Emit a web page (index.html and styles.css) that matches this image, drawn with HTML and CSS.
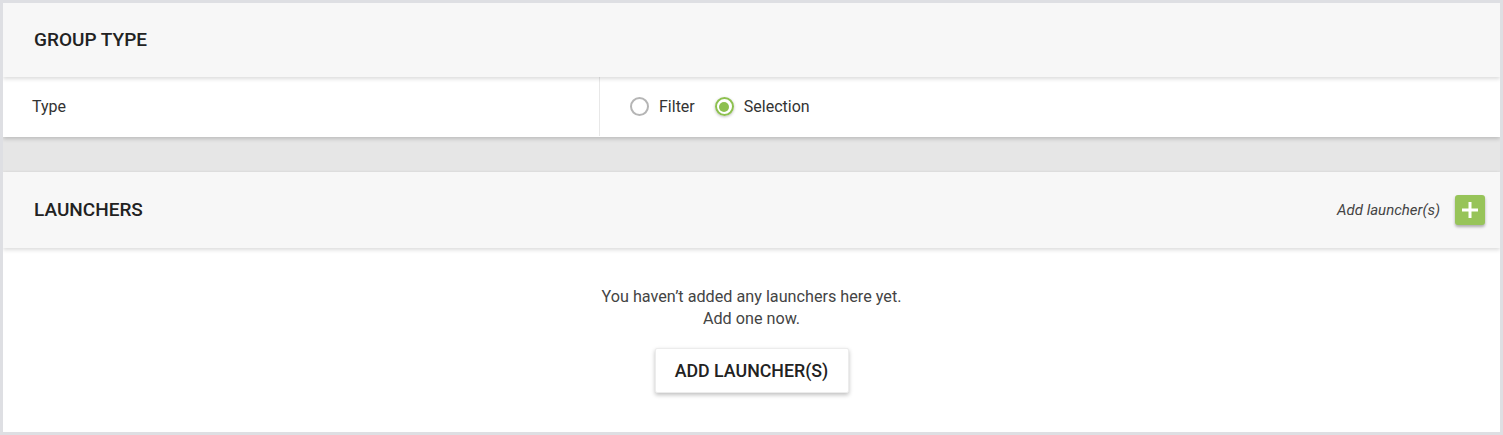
FILE: index.html
```html
<!DOCTYPE html>
<html>
<head>
<meta charset="utf-8">
<link rel="stylesheet" href="styles.css">
</head>
<body>
<div class="frame">
  <section class="card">
    <header class="card-head"><h2>GROUP TYPE</h2></header>
    <div class="row">
      <div class="row-label">Type</div>
      <div class="row-value">
        <label class="radio"><span class="dot"></span>Filter</label>
        <label class="radio checked"><span class="dot"></span>Selection</label>
      </div>
    </div>
  </section>
  <div class="gap"></div>
  <section class="card card-grow">
    <header class="card-head launchers-head">
      <h2>LAUNCHERS</h2>
      <div class="head-actions">
        <span class="add-hint">Add launcher(s)</span>
        <button class="plus-btn" aria-label="Add launcher(s)">
          <svg width="18" height="18" viewBox="0 0 18 18"><path d="M9 1v16M1 9h16" stroke="#fff" stroke-width="3" fill="none"/></svg>
        </button>
      </div>
    </header>
    <div class="empty">
      <p>You haven’t added any launchers here yet.<br>Add one now.</p>
      <button class="add-btn">ADD LAUNCHER(S)</button>
    </div>
  </section>
</div>
</body>
</html>
```
FILE: styles.css
```css
* { box-sizing: border-box; }
html, body { margin: 0; padding: 0; }
body {
  font-family: Roboto, "Liberation Sans", Arial, sans-serif;
  color: #222;
  background: #e6e6e6;
}
.frame {
  width: 1503px;
  height: 435px;
  border: 3px solid #dedfe3;
  background: #e6e6e6;
  display: flex;
  flex-direction: column;
  overflow: hidden;
}
.card {
  background: #fff;
  position: relative;
  box-shadow: 0 2px 4px rgba(0,0,0,0.18);
  z-index: 1;
}
.card-grow { flex: 1; display: flex; flex-direction: column; }
.card-head {
  height: 74px;
  background: #f7f7f7;
  display: flex;
  align-items: center;
  padding-left: 31px;
  padding-bottom: 1px;
  box-shadow: 0 2px 4px rgba(0,0,0,0.14);
  position: relative;
  z-index: 2;
}
.card-head h2 {
  margin: 0;
  font-size: 19px;
  font-weight: 500;
  color: #222;
  letter-spacing: 0;
}
.launchers-head { height: 76px; justify-content: space-between; padding-right: 15px; }
.row { display: flex; height: 60px; padding-bottom: 1px; }
.row-label {
  width: 597px;
  border-right: 1px solid #e8e8e8;
  display: flex;
  align-items: center;
  padding-left: 29px;
  font-size: 16px;
  color: #333;
}
.row-value {
  display: flex;
  align-items: center;
  padding-left: 30px;
  gap: 20px;
  font-size: 16px;
  color: #333;
}
.radio { display: flex; align-items: center; gap: 10px; }
.dot {
  width: 19px;
  height: 19px;
  border-radius: 50%;
  border: 2px solid #b5b5b5;
  display: inline-block;
  position: relative;
}
.radio.checked .dot {
  border-color: #8dc04f;
  box-shadow: 0 1px 3px rgba(0,0,0,0.25);
}
.radio.checked .dot::after {
  content: "";
  position: absolute;
  left: 2.5px;
  top: 2.5px;
  width: 10px;
  height: 10px;
  border-radius: 50%;
  background: #8dc04f;
}
.gap { height: 35px; background: #e6e6e6; flex: none; }
.head-actions { display: flex; align-items: center; gap: 15px; }
.add-hint { font-size: 15px; font-style: italic; color: #444; }
.plus-btn {
  width: 30px;
  height: 30px;
  border: 0;
  border-radius: 3px;
  background: #97c459;
  display: flex;
  align-items: center;
  justify-content: center;
  padding: 0;
  box-shadow: 0 2px 3px rgba(0,0,0,0.3);
}
.empty {
  flex: 1;
  display: flex;
  flex-direction: column;
  align-items: center;
  padding-top: 38px;
}
.empty p {
  margin: 0;
  text-align: center;
  font-size: 16.2px;
  line-height: 22px;
  color: #444;
}
.add-btn {
  margin-top: 18px;
  width: 194px;
  height: 45px;
  border: 1px solid #ececec;
  border-radius: 2px;
  background: #fff;
  font-family: inherit;
  font-size: 17.8px;
  font-weight: 500;
  color: #222;
  box-shadow: 0 2px 4px rgba(0,0,0,0.25);
}
```
